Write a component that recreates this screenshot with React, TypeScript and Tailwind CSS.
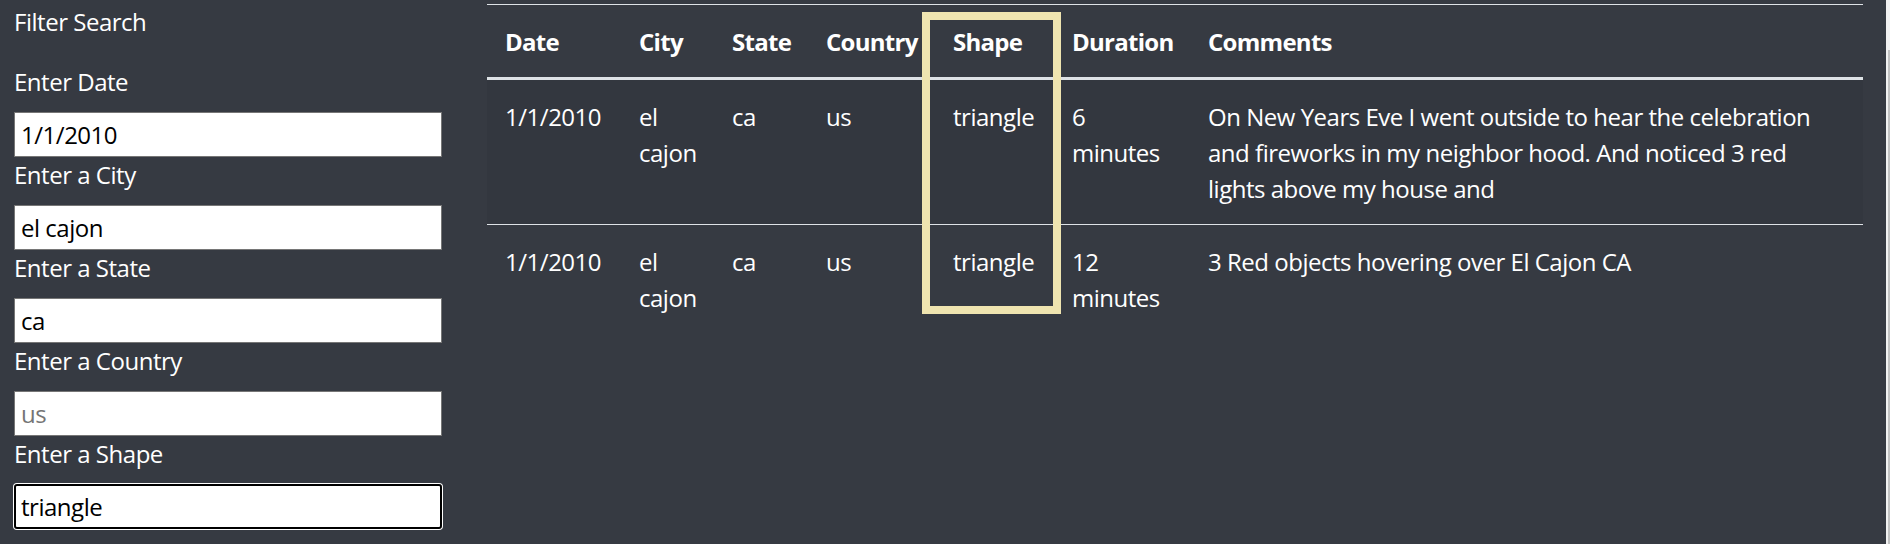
import React from 'react';

interface Sighting {
  date: string;
  city: string;
  state: string;
  country: string;
  shape: string;
  duration: string;
  comments: string;
}

const sightings: Sighting[] = [
  {
    date: '1/1/2010',
    city: 'el cajon',
    state: 'ca',
    country: 'us',
    shape: 'triangle',
    duration: '6 minutes',
    comments:
      'On New Years Eve I went outside to hear the celebration and fireworks in my neighbor hood. And noticed 3 red lights above my house and'
  },
  {
    date: '1/1/2010',
    city: 'el cajon',
    state: 'ca',
    country: 'us',
    shape: 'triangle',
    duration: '12 minutes',
    comments: '3 Red objects hovering over El Cajon CA'
  }
];

const filters = [
  { label: 'Enter Date', value: '1/1/2010' },
  { label: 'Enter a City', value: 'el cajon' },
  { label: 'Enter a State', value: 'ca' },
  { label: 'Enter a Country', value: '', placeholder: 'us' },
  { label: 'Enter a Shape', value: 'triangle', focused: true }
];

const headers = ['Date', 'City', 'State', 'Country', 'Shape', 'Duration', 'Comments'];

const FilterPanel: React.FC = () => (
  <div className="w-[487px] shrink-0 pl-[14px] pt-[4px]">
    <div className="leading-[36px] mb-[24px]">Filter Search</div>
    {filters.map((f) => (
      <div key={f.label}>
        <label className="block leading-[36px] mb-[12px]">{f.label}</label>
        {f.focused ? (
          <input
            type="text"
            autoFocus
            defaultValue={f.value}
            className="block w-[428px] h-[45px] bg-white text-black px-[5px] border-2 border-black rounded-[3px] ring-1 ring-white outline-none caret-black"
          />
        ) : (
          <input
            type="text"
            defaultValue={f.value}
            placeholder={f.placeholder}
            className="block w-[428px] h-[45px] bg-white text-black px-[6px] border border-[#767676] outline-none placeholder:text-[#757575]"
          />
        )}
      </div>
    ))}
  </div>
);

const SightingsTable: React.FC = () => (
  <div className="relative w-[1376px] shrink-0 pt-[4px]">
    <table className="w-full table-fixed border-collapse text-left">
      <colgroup>
        <col className="w-[134px]" />
        <col className="w-[93px]" />
        <col className="w-[94px]" />
        <col className="w-[127px]" />
        <col className="w-[119px]" />
        <col className="w-[136px]" />
        <col />
      </colgroup>
      <thead>
        <tr>
          {headers.map((h) => (
            <th
              key={h}
              className="pt-[19px] pb-[17px] px-[18px] font-bold align-bottom border-t border-b-[3px] border-[#dee2e6] whitespace-nowrap tracking-[-0.03em]"
            >
              {h}
            </th>
          ))}
        </tr>
      </thead>
      <tbody>
        {sightings.map((s, i) => (
          <tr key={i} className={i % 2 === 0 ? 'bg-[#33373f]' : ''}>
            {[s.date, s.city, s.state, s.country, s.shape, s.duration, s.comments].map((v, j) => (
              <td key={j} className={`pt-[19px] pb-[17px] px-[18px] align-top ${i > 0 ? 'border-t border-[#dee2e6]' : ''}`}>
                {v}
              </td>
            ))}
          </tr>
        ))}
      </tbody>
    </table>
    {/* highlight around the shape column */}
    <div className="absolute left-[435px] top-[12px] w-[139px] h-[302px] border-8 border-[#efe4b0] pointer-events-none" />
  </div>
);

export default function App() {
  return (
    <div className="flex h-[544px] overflow-hidden bg-[#363a42] text-white text-[24px] leading-[36px] tracking-[-0.02em] font-['Open_Sans',sans-serif]">
      <FilterPanel />
      <SightingsTable />
      <div className="flex-1" />
      <div className="w-[4px] flex flex-col bg-[#f1f1f1]">
        <div className="h-[50px]" />
        <div className="flex-1 ml-[2px] bg-[#c1c1c1]" />
      </div>
    </div>
  );
}
